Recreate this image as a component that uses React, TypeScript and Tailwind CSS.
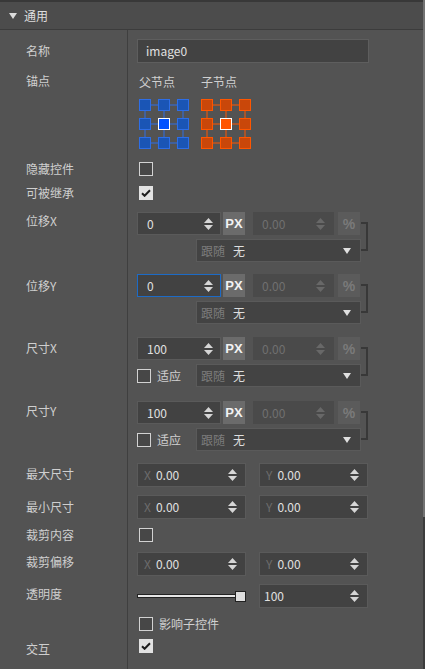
import React from "react";

const Spin = ({ dim }: { dim?: boolean }) => (
  <svg width="9" height="12" viewBox="0 0 9 12" className="shrink-0">
    <path d="M4.5 0L9 5H0z" fill={dim ? "#686868" : "#d6d6d6"} />
    <path d="M0 7h9l-4.5 5z" fill={dim ? "#686868" : "#d6d6d6"} />
  </svg>
);

const Check = ({ on }: { on?: boolean }) =>
  on ? (
    <div className="ml-[2px] flex h-[14px] w-[14px] items-center justify-center bg-[#e2e2e2]">
      <svg width="10" height="8" viewBox="0 0 10 8">
        <path d="M1 4.2l2.6 2.6L9 1.3" stroke="#1e1e1e" strokeWidth="2" fill="none" />
      </svg>
    </div>
  ) : (
    <div className="ml-[2px] h-[14px] w-[14px] border border-[#d2d2d2] bg-[#474747]" />
  );

const Anchor = ({ fill, stroke, center }: { fill: string; stroke: string; center: string }) => {
  const pos = [0, 19, 38];
  return (
    <svg width="50" height="50" viewBox="0 0 50 50">
      {pos.map((p) => (
        <g key={`l${p}`} stroke={stroke} strokeWidth="1">
          <line x1="12" x2="19" y1={p + 6} y2={p + 6} />
          <line x1="31" x2="38" y1={p + 6} y2={p + 6} />
          <line y1="12" y2="19" x1={p + 6} x2={p + 6} />
          <line y1="31" y2="38" x1={p + 6} x2={p + 6} />
        </g>
      ))}
      {pos.map((y) =>
        pos.map((x) => {
          const mid = x === 19 && y === 19;
          return (
            <rect
              key={`r${x}-${y}`}
              x={x + 0.5}
              y={y + 0.5}
              width="11"
              height="11"
              fill={mid ? center : fill}
              stroke={mid ? "#ffffff" : stroke}
              strokeWidth="1"
            />
          );
        })
      )}
    </svg>
  );
};

const Dropdown = () => (
  <div className="flex h-[23px] w-[165px] items-center border border-[#5a5a5a] bg-[#434343] pl-[4px] pr-[9px]">
    <span className="text-[#7c7c7c]">跟随</span>
    <span className="ml-[8px] text-[#dedede]">无</span>
    <svg width="8" height="6" viewBox="0 0 8 6" className="ml-auto">
      <path d="M0 0h8L4 6z" fill="#e0e0e0" />
    </svg>
  </div>
);

const PosGroup = ({ value, focus, fit }: { value: string; focus?: boolean; fit?: boolean }) => (
  <div className="flex">
    <div className="flex flex-col gap-[4px]">
      <div className="flex items-center">
        <div
          className={`flex h-[23px] w-[84px] items-center border bg-[#424242] pl-[9px] pr-[7px] text-[#e0e0e0] ${
            focus ? "border-[#1d6bc6]" : "border-[#5a5a5a]"
          }`}
        >
          {value}
          <span className="ml-auto">
            <Spin />
          </span>
        </div>
        <div className="ml-[2px] flex h-[23px] w-[22px] items-center justify-center bg-[#6b6b6b] font-['Liberation_Sans',sans-serif] text-[13px] font-bold text-[#f2f2f2]">
          PX
        </div>
        <div className="ml-[8px] flex h-[23px] w-[81px] items-center bg-[#4a4a4a] pl-[9px] pr-[9px] text-[#707070]">
          0.00
          <span className="ml-auto">
            <Spin dim />
          </span>
        </div>
        <div className="ml-[4px] flex h-[23px] w-[22px] items-center justify-center bg-[#5b5b5b] font-['Liberation_Sans',sans-serif] text-[14px] font-bold text-[#7a7a7a]">
          %
        </div>
      </div>
      <div className="flex items-center">
        {fit ? (
          <div className="flex w-[59px] items-center">
            <div className="h-[14px] w-[14px] border border-[#d2d2d2] bg-[#474747]" />
            <span className="ml-[6px] text-[#d0d0d0]">适应</span>
          </div>
        ) : (
          <div className="w-[59px]" />
        )}
        <Dropdown />
      </div>
    </div>
    <div className="mt-[10px] h-[29px] w-[7px] border-y-2 border-r-2 border-[#383838]" />
  </div>
);

const XY = ({ axis }: { axis: string }) => (
  <div className="flex h-[24px] w-[109px] items-center border border-[#5a5a5a] bg-[#424242] pl-[6px] pr-[8px]">
    <span className="text-[#6c6c6c]">{axis}</span>
    <span className="ml-[5px] text-[#e0e0e0]">0.00</span>
    <span className="ml-auto">
      <Spin />
    </span>
  </div>
);

const XYPair = () => (
  <div className="flex gap-[13px]">
    <XY axis="X" />
    <XY axis="Y" />
  </div>
);

const Row = ({
  label,
  h,
  lt,
  ct,
  children,
}: {
  label?: string;
  h: string;
  lt: string;
  ct: string;
  children?: React.ReactNode;
}) => (
  <div className={`flex ${h}`}>
    <div className={`w-[128px] shrink-0 border-r border-[#3f3f3f] pl-[26px] text-[#cfcfcf] ${lt}`}>{label}</div>
    <div className={`pl-[9px] ${ct}`}>{children}</div>
  </div>
);

export default function App() {
  return (
    <div className="flex h-[669px] w-[425px] overflow-hidden bg-[#535353] font-['Noto_Sans_CJK_SC',sans-serif] text-[12px] leading-[16px]">
      <div className="w-[423px]">
        <div className="flex h-[30px] items-center border-t-2 border-b border-t-[#383838] border-b-[#3c3c3c] bg-[#4c4c4c] pl-[9px] text-[#dedede]">
          <svg width="8" height="6" viewBox="0 0 8 6">
            <path d="M0 0h8L4 6z" fill="#dcdcdc" />
          </svg>
          <span className="ml-[7px]">通用</span>
        </div>

        <Row label="名称" h="h-[38px]" lt="pt-[13px]" ct="pt-[9px]">
          <div className="flex h-[24px] w-[232px] items-center border border-[#5e5e5e] bg-[#424242] pl-[8px] text-[#e0e0e0]">
            image0
          </div>
        </Row>

        <Row label="锚点" h="h-[89px]" lt="pt-[5px]" ct="pt-[6px]">
          <div className="flex gap-[12px] pl-[2px]">
            <div className="flex flex-col gap-[9px]">
              <span className="text-[#d0d0d0]">父节点</span>
              <Anchor fill="#1a55b5" stroke="#2e6ee6" center="#0052ff" />
            </div>
            <div className="flex flex-col gap-[9px]">
              <span className="text-[#d0d0d0]">子节点</span>
              <Anchor fill="#c9470a" stroke="#ff5600" center="#ff5500" />
            </div>
          </div>
        </Row>

        <Row label="隐藏控件" h="h-[24px]" lt="pt-[4px]" ct="pt-[5px]">
          <Check />
        </Row>
        <Row label="可被继承" h="h-[24px]" lt="pt-[4px]" ct="pt-[5px]">
          <Check on />
        </Row>

        <Row label="位移X" h="h-[63px]" lt="pt-[8px]" ct="pt-[7px]">
          <PosGroup value="0" />
        </Row>
        <Row label="位移Y" h="h-[63px]" lt="pt-[10px]" ct="pt-[6px]">
          <PosGroup value="0" focus />
        </Row>
        <Row label="尺寸X" h="h-[63px]" lt="pt-[9px]" ct="pt-[6px]">
          <PosGroup value="100" fit />
        </Row>
        <Row label="尺寸Y" h="h-[63px]" lt="pt-[9px]" ct="pt-[7px]">
          <PosGroup value="100" fit />
        </Row>

        <Row label="最大尺寸" h="h-[33px]" lt="pt-[9px]" ct="pt-[6px]">
          <XYPair />
        </Row>
        <Row label="最小尺寸" h="h-[32px]" lt="pt-[9px]" ct="pt-[5px]">
          <XYPair />
        </Row>
        <Row label="裁剪内容" h="h-[24px]" lt="pt-[5px]" ct="pt-[6px]">
          <Check />
        </Row>
        <Row label="裁剪偏移" h="h-[34px]" lt="pt-[8px]" ct="pt-[6px]">
          <XYPair />
        </Row>

        <Row label="透明度" h="h-[31px]" lt="pt-[6px]" ct="pt-[4px]">
          <div className="flex gap-[13px]">
            <div className="flex h-[24px] w-[109px] items-center">
              <div className="h-[4px] w-[99px] border border-[#222] bg-[#e6e6e6]" />
              <div className="-ml-[1px] h-[11px] w-[11px] border border-[#222] bg-[#dedede]" />
            </div>
            <div className="flex h-[24px] w-[109px] items-center border border-[#5a5a5a] bg-[#424242] pl-[4px] pr-[8px] text-[#e0e0e0]">
              100
              <span className="ml-auto">
                <Spin />
              </span>
            </div>
          </div>
        </Row>

        <Row h="h-[23px]" lt="pt-[0px]" ct="pt-[5px]">
          <div className="flex items-center">
            <Check />
            <span className="ml-[6px] text-[#d0d0d0]">影响子控件</span>
          </div>
        </Row>
        <Row label="交互" h="h-[35px]" lt="pt-[7px]" ct="pt-[5px]">
          <Check on />
        </Row>
      </div>
      <div className="flex w-[2px] flex-col">
        <div className="h-[517px] bg-[#727272]" />
        <div className="flex-1 bg-[#3c3c3c]" />
      </div>
    </div>
  );
}
